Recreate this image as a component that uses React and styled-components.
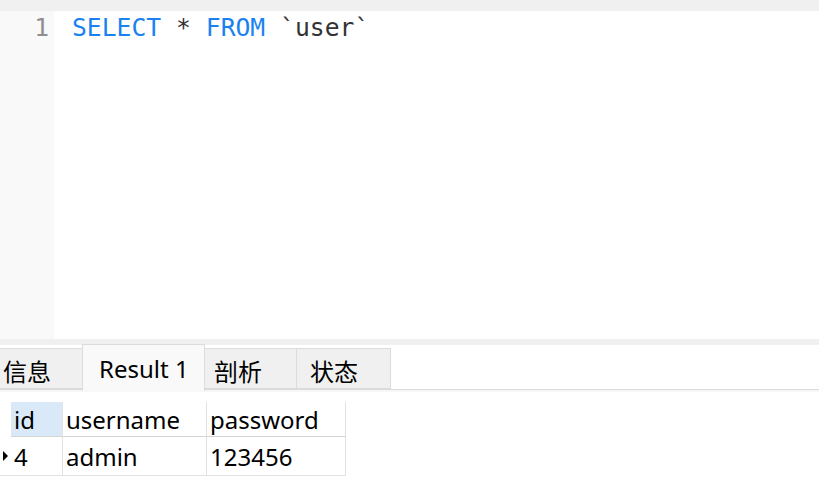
import React from 'react';
import styled, { createGlobalStyle } from 'styled-components';

const GlobalStyle = createGlobalStyle`
  html, body {
    margin: 0;
    padding: 0;
    background: #ffffff;
  }
`;

const UI_FONT = `"Noto Sans", "Noto Sans CJK SC", sans-serif`;
const MONO_FONT = `"DejaVu Sans Mono", "Liberation Mono", monospace`;

const tabs = [
  { label: '信息', width: 83, pad: 3 },
  { label: 'Result 1', width: 123, pad: 16 },
  { label: '剖析', width: 93, pad: 9 },
  { label: '状态', width: 95, pad: 13 },
];

const columns = [
  { key: 'id', label: 'id', width: 52 },
  { key: 'username', label: 'username', width: 144 },
  { key: 'password', label: 'password', width: 139 },
];

const rows = [{ id: '4', username: 'admin', password: '123456' }];

export default function App() {
  return (
    <>
      <GlobalStyle />
      <Window>
        <TopStrip />
        <Editor>
          <Gutter>
            <LineNo>1</LineNo>
          </Gutter>
          <Code>
            <Keyword>SELECT</Keyword> * <Keyword>FROM</Keyword> `user`
          </Code>
        </Editor>
        <Splitter />
        <TabBar>
          {tabs.map((t, i) => (
            <Tab
              key={t.label}
              $active={i === 1}
              $width={t.width}
              $pad={t.pad}
              $first={i === 0}
            >
              {t.label}
            </Tab>
          ))}
        </TabBar>
        <TabShadow />
        <Grid>
          <HeadRow>
            <Indicator />
            {columns.map((c, i) => (
              <HeadCell key={c.key} $width={c.width} $selected={i === 0}>
                {c.label}
              </HeadCell>
            ))}
          </HeadRow>
          {rows.map((r) => (
            <DataRow key={r.id}>
              <Indicator $border>
                <Arrow />
              </Indicator>
              {columns.map((c) => (
                <Cell key={c.key} $width={c.width}>
                  {r[c.key]}
                </Cell>
              ))}
            </DataRow>
          ))}
        </Grid>
      </Window>
    </>
  );
}

const Window = styled.div`
  width: 819px;
  height: 493px;
  display: flex;
  flex-direction: column;
  overflow: hidden;
  background: #ffffff;
`;

const TopStrip = styled.div`
  height: 11px;
  background: #f0f0f0;
`;

const Editor = styled.div`
  height: 328px;
  display: flex;
  background: #ffffff;
`;

const Gutter = styled.div`
  width: 54px;
  background: #f9f9f9;
  text-align: right;
  box-sizing: border-box;
  padding-right: 5px;
`;

const LineNo = styled.div`
  font-family: ${MONO_FONT};
  font-size: 24.7px;
  line-height: 34px;
  color: #8e8e8e;
`;

const Code = styled.div`
  padding-left: 18px;
  font-family: ${MONO_FONT};
  font-size: 24.7px;
  line-height: 34px;
  color: #333333;
  white-space: pre;
`;

const Keyword = styled.span`
  color: #1a82f0;
`;

const Splitter = styled.div`
  height: 6px;
  background: #f0f0f0;
`;

const TabBar = styled.div`
  height: 45px;
  display: flex;
  align-items: flex-end;
  border-bottom: 1px solid #dadada;
  box-sizing: border-box;
`;

const Tab = styled.div`
  width: ${({ $width }) => $width}px;
  height: ${({ $active }) => ($active ? 47 : 41)}px;
  margin-bottom: ${({ $active }) => ($active ? -2 : 0)}px;
  margin-left: ${({ $first }) => ($first ? 0 : -1)}px;
  box-sizing: border-box;
  display: flex;
  align-items: center;
  padding-left: ${({ $pad }) => $pad}px;
  padding-top: ${({ $active }) => ($active ? 0 : 3)}px;
  background: ${({ $active }) => ($active ? '#f9f9f9' : '#f0f0f0')};
  border: 1px solid #dcdcdc;
  border-left: ${({ $first }) => ($first ? 'none' : '1px solid #dcdcdc')};
  border-bottom: ${({ $active }) => ($active ? 'none' : '1px solid #dcdcdc')};
  position: relative;
  z-index: ${({ $active }) => ($active ? 1 : 0)};
  font-family: ${UI_FONT};
  font-size: 24px;
  color: #000000;
`;

const TabShadow = styled.div`
  height: 2px;
  background: #f7f7f7;
`;

const Grid = styled.div`
  margin-top: 10px;
  display: flex;
  flex-direction: column;
`;

const HeadRow = styled.div`
  display: flex;
  height: 35px;
`;

const DataRow = styled.div`
  display: flex;
  height: 39px;
`;

const Indicator = styled.div`
  width: 11px;
  display: flex;
  align-items: center;
  padding-left: 3px;
  box-sizing: border-box;
  border-bottom: ${({ $border }) => ($border ? '1px solid #e2e2e2' : 'none')};
`;

const Arrow = styled.div`
  width: 0;
  height: 0;
  border-top: 5px solid transparent;
  border-bottom: 5px solid transparent;
  border-left: 5px solid #000000;
`;

const CellBase = styled.div`
  width: ${({ $width }) => $width}px;
  box-sizing: border-box;
  padding-left: 3px;
  display: flex;
  align-items: center;
  border-right: 1px solid #e2e2e2;
  border-bottom: 1px solid #e2e2e2;
  font-family: ${UI_FONT};
  font-size: 24px;
  color: #000000;
  white-space: nowrap;
`;

const HeadCell = styled(CellBase)`
  background: ${({ $selected }) => ($selected ? '#d9e9f7' : '#ffffff')};
  border-bottom: 1px solid #d4d4d4;
`;

const Cell = styled(CellBase)`
  padding-top: 1px;
`;
